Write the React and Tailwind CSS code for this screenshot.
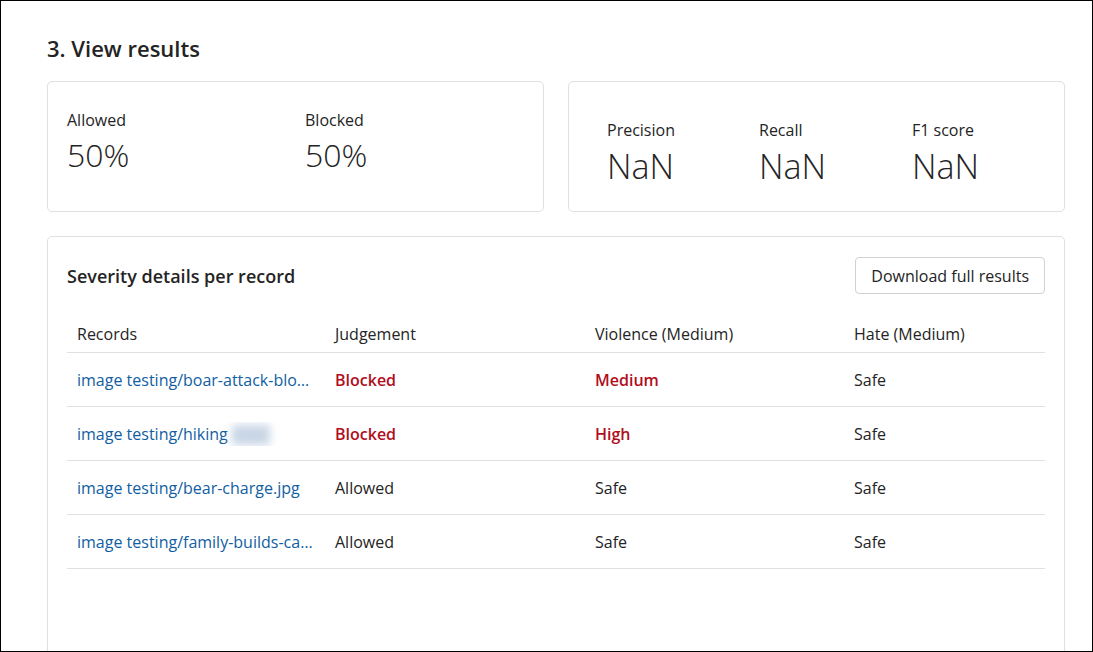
const ROWS = [
  { record: 'image testing/boar-attack-blog-post.jpg', judgement: 'Blocked', violence: 'Medium', hate: 'Safe' },
  { record: 'image testing/hiking', hidden: 'trip.jpg', judgement: 'Blocked', violence: 'High', hate: 'Safe' },
  { record: 'image testing/bear-charge.jpg', judgement: 'Allowed', violence: 'Safe', hate: 'Safe' },
  { record: 'image testing/family-builds-cabin.jpg', judgement: 'Allowed', violence: 'Safe', hate: 'Safe' },
];

const FLAGGED = ['Blocked', 'Medium', 'High'];

function Cell({ value }) {
  const flagged = FLAGGED.includes(value);
  return (
    <div className={`px-[10px] truncate ${flagged ? 'text-[#b10e1c] font-semibold' : 'text-[#242424]'}`}>
      {value}
    </div>
  );
}

function Stat({ label, value, big }) {
  return (
    <div>
      <p className="text-[16px] leading-5 text-[#242424]">{label}</p>
      <p className={`${big ? 'text-[34px] mt-[6px]' : 'text-[32px] mt-[5px]'} font-light leading-10 text-[#242424]`}>
        {value}
      </p>
    </div>
  );
}

export default function App() {
  return (
    <div
      className="w-[1093px] h-[652px] overflow-hidden bg-white border border-black text-[#242424]"
      style={{ fontFamily: '"Segoe UI", "Open Sans", "Noto Sans", sans-serif' }}
    >
      <div className="pl-[46px] pr-[27px] pt-[33px]">
        <h2 className="text-[22px] font-semibold leading-7">3. View results</h2>

        {/* Summary cards */}
        <div className="mt-[19px] grid grid-cols-2 gap-[24px]">
          <div className="h-[131px] rounded-[5px] border border-[#e0e0e0] px-[19px] pt-[28px] flex">
            <div className="w-[238px]"><Stat label="Allowed" value="50%" /></div>
            <div><Stat label="Blocked" value="50%" /></div>
          </div>
          <div className="h-[131px] rounded-[5px] border border-[#e0e0e0] px-[38px] pt-[38px] flex">
            <div className="w-[152px]"><Stat label="Precision" value="NaN" big /></div>
            <div className="w-[153px]"><Stat label="Recall" value="NaN" big /></div>
            <div><Stat label="F1 score" value="NaN" big /></div>
          </div>
        </div>

        {/* Details */}
        <div className="mt-[24px] h-[440px] rounded-[5px] border border-[#e0e0e0] px-[19px] pt-[20px]">
          <div className="flex items-center justify-between">
            <h3 className="text-[18px] font-semibold leading-6">Severity details per record</h3>
            <button className="h-[37px] px-[15px] rounded-[4px] border border-[#d1d1d1] bg-white text-[16px] font-medium text-[#242424]">
              Download full results
            </button>
          </div>

          <div className="mt-[21px] text-[16px]">
            <div className="grid grid-cols-[258px_260px_259px_1fr] h-[38px] items-center border-b border-[#e0e0e0]">
              <div className="px-[10px] font-medium">Records</div>
              <div className="px-[10px] font-medium">Judgement</div>
              <div className="px-[10px] font-medium">Violence (Medium)</div>
              <div className="px-[10px] font-medium">Hate (Medium)</div>
            </div>
            {ROWS.map((row) => (
              <div
                key={row.record}
                className="grid grid-cols-[258px_260px_259px_1fr] h-[54px] items-center border-b border-[#e0e0e0]"
              >
                <div className="px-[10px] truncate text-[#115ea3]">
                  {row.record}
                  {row.hidden && (
                    <span className="inline-block align-middle ml-[4px] w-[38px] h-[20px] bg-[#c9d6e6] blur-[4px]" />
                  )}
                </div>
                <Cell value={row.judgement} />
                <Cell value={row.violence} />
                <Cell value={row.hate} />
              </div>
            ))}
          </div>
        </div>
      </div>
    </div>
  );
}
